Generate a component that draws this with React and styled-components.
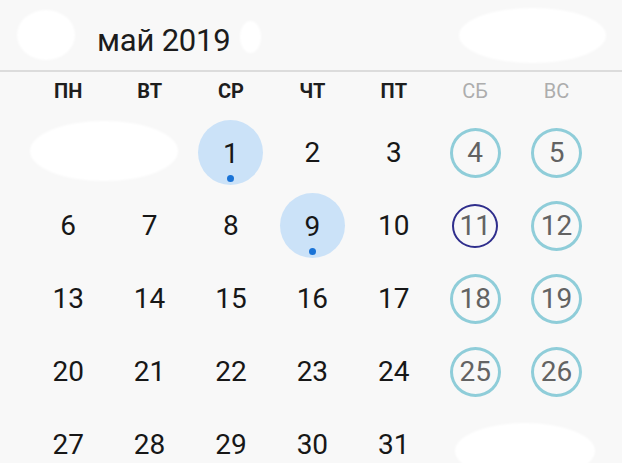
import React from "react";
import styled, { createGlobalStyle } from "styled-components";

const GlobalStyle = createGlobalStyle`
  html, body {
    margin: 0;
    padding: 0;
    background: #f8f8f8;
  }
  body {
    font-family: Roboto, "Noto Sans", Arial, sans-serif;
    width: 622px;
    height: 463px;
    overflow: hidden;
  }
`;

const Screen = styled.div`
  position: relative;
  width: 622px;
  height: 463px;
  background: #f8f8f8;
  overflow: hidden;
`;

const Header = styled.header`
  height: 72px;
  display: flex;
  align-items: center;
  padding: 10px 0 0 97px;
  box-sizing: border-box;
  border-bottom: 2px solid #dcdcdc;
`;

const Title = styled.h1`
  margin: 0;
  font-size: 31px;
  font-weight: 400;
  color: #1c1c1c;
  letter-spacing: -0.2px;
`;

const Grid = styled.div`
  display: grid;
  grid-template-columns: repeat(7, 81.4px);
  padding: 0 0 0 27.5px;
`;

const WeekdayRow = styled(Grid)`
  height: 38px;
  align-items: center;
  margin-bottom: 6px;
`;

const Weekday = styled.div`
  text-align: center;
  font-size: 20px;
  color: ${(p) => (p.$weekend ? "#adadad" : "#1e1e1e")};
  font-weight: ${(p) => (p.$weekend ? 400 : 700)};
`;

const DaysGrid = styled(Grid)`
  grid-auto-rows: 73px;
`;

const Cell = styled.div`
  position: relative;
  display: flex;
  align-items: center;
  justify-content: center;
`;

const Number = styled.span`
  position: relative;
  display: flex;
  align-items: center;
  justify-content: center;
  font-size: 28px;
  line-height: 1;
  color: ${(p) => (p.$weekend ? "#636363" : "#171717")};
  box-sizing: border-box;
  border-radius: 50%;

  ${(p) =>
    p.$event &&
    `
    width: 65px;
    height: 65px;
    padding-top: 3px;
    background: #cbe2f8;
  `}

  ${(p) =>
    p.$weekend &&
    `
    width: 51px;
    height: 50px;
    border: 3px solid ${p.$today ? "#2f2e8c" : "#8fcdd9"};
  `}

  ${(p) =>
    p.$today &&
    `
    width: 46px;
    height: 44px;
    border-width: 2.5px;
  `}
`;

const Dot = styled.i`
  position: absolute;
  left: 50%;
  bottom: 3px;
  width: 7px;
  height: 7px;
  margin-left: -3.5px;
  border-radius: 50%;
  background: #1a73d6;
`;

const Blob = styled.div`
  position: absolute;
  background: #ffffff;
  border-radius: 50%;
  filter: blur(1px);
`;

const weekdays = ["ПН", "ВТ", "СР", "ЧТ", "ПТ", "СБ", "ВС"];

const days = [
  null, null, 1, 2, 3, 4, 5,
  6, 7, 8, 9, 10, 11, 12,
  13, 14, 15, 16, 17, 18, 19,
  20, 21, 22, 23, 24, 25, 26,
  27, 28, 29, 30, 31, null, null,
];

const events = [1, 9];
const today = 11;

const blobs = [
  { left: 17, top: 10, width: 58, height: 50 },
  { left: 240, top: 21, width: 21, height: 32 },
  { left: 459, top: 8, width: 147, height: 55 },
  { left: 30, top: 121, width: 148, height: 60 },
  { left: 455, top: 423, width: 140, height: 56 },
];

export default function App() {
  return (
    <Screen>
      <GlobalStyle />
      <Header>
        <Title>май 2019</Title>
      </Header>
      <WeekdayRow>
        {weekdays.map((d, i) => (
          <Weekday key={d} $weekend={i > 4}>
            {d}
          </Weekday>
        ))}
      </WeekdayRow>
      <DaysGrid>
        {days.map((d, i) => {
          const weekend = i % 7 > 4;
          return (
            <Cell key={i}>
              {d && (
                <Number
                  $weekend={weekend}
                  $event={events.includes(d)}
                  $today={d === today}
                >
                  {d}
                  {events.includes(d) && <Dot />}
                </Number>
              )}
            </Cell>
          );
        })}
      </DaysGrid>
      {blobs.map((b, i) => (
        <Blob key={i} style={b} />
      ))}
    </Screen>
  );
}
